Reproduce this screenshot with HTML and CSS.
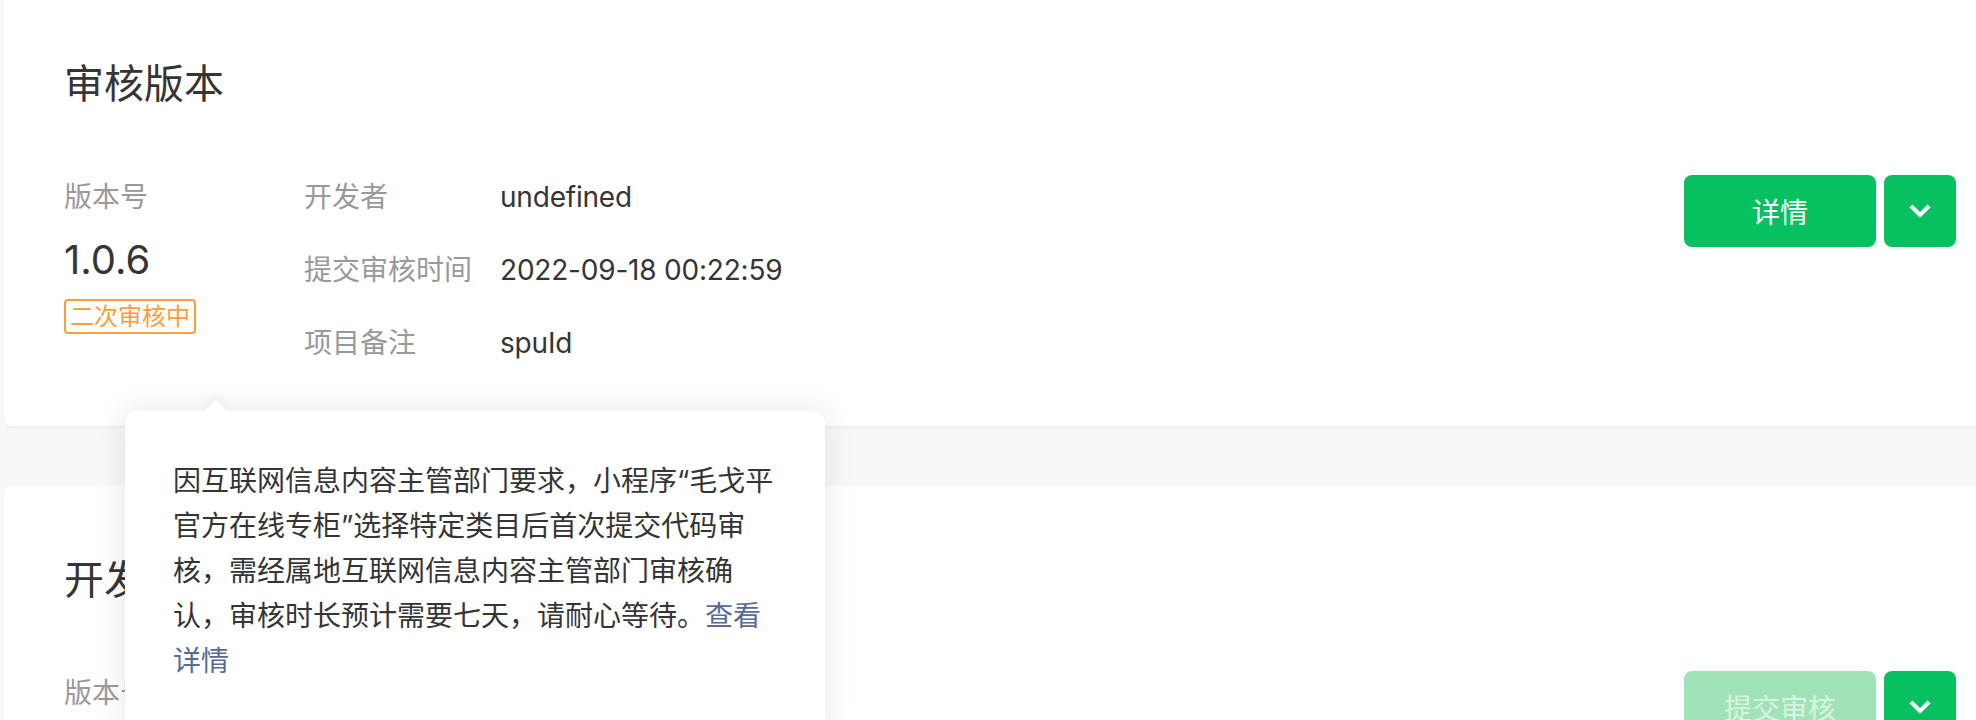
FILE: index.html
```html
<!DOCTYPE html>
<html lang="zh-CN">

	<head>
		<meta charset="utf-8" />
		<title>版本管理</title>
		<link rel="stylesheet" href="styles.css">
	</head>

	<body>
		<div class="page">
			<div class="card">
				<h2 class="card-title">审核版本</h2>
				<div class="card-body">
					<div class="version">
						<div class="version-label">版本号</div>
						<div class="version-num">1.0.6</div>
						<span class="tag">二次审核中</span>
					</div>
					<dl class="info">
						<div class="info-row"><dt>开发者</dt><dd>undefined</dd></div>
						<div class="info-row"><dt>提交审核时间</dt><dd>2022-09-18 00:22:59</dd></div>
						<div class="info-row"><dt>项目备注</dt><dd>spuId</dd></div>
					</dl>
					<div class="actions">
						<button class="btn">详情</button>
						<button class="btn btn-more">
							<svg width="24" height="16" viewBox="0 0 24 16"><polyline points="3,3 12,12 21,3" fill="none" stroke="#fff" stroke-width="4" /></svg>
						</button>
					</div>
				</div>

				<div class="popover">
					因互联网信息内容主管部门要求，小程序“毛戈平官方在线专柜”选择特定类目后首次提交代码审核，需经属地互联网信息内容主管部门审核确认，审核时长预计需要七天，请耐心等待。<a href="#">查看详情</a>
				</div>
			</div>

			<div class="card">
				<h2 class="card-title">开发版本</h2>
				<div class="card-body">
					<div class="version">
						<div class="version-label">版本号</div>
						<div class="version-num">1.0.7</div>
					</div>
					<dl class="info">
						<div class="info-row"><dt>开发者</dt><dd>undefined</dd></div>
						<div class="info-row"><dt>提交时间</dt><dd>2022-09-18 00:20:13</dd></div>
					</dl>
					<div class="actions">
						<button class="btn btn-disabled">提交审核</button>
						<button class="btn btn-more">
							<svg width="24" height="16" viewBox="0 0 24 16"><polyline points="3,3 12,12 21,3" fill="none" stroke="#fff" stroke-width="4" /></svg>
						</button>
					</div>
				</div>
			</div>
		</div>
	</body>

</html>
```

FILE: styles.css
```css
* {
	margin: 0;
	padding: 0;
}

a {
	text-decoration: none;
	color: #576b95;
}

body {
	background: #f7f8fa;
	overflow: hidden;
	font-family: Inter, "Noto Sans CJK SC", sans-serif;
	color: #353535;
}

.page {
	margin-top: -10px;
	display: flex;
	flex-direction: column;
	gap: 60px;
}

.card {
	position: relative;
	margin: 0 -40px 0 4px;
	padding: 66px 60px 61px;
	background: #fff;
	border-radius: 8px;
	box-shadow: 0 2px 3px rgba(0, 0, 0, .05);
}

.card-title {
	font-size: 40px;
	line-height: 56px;
	font-weight: 400;
}

.card-body {
	display: flex;
	align-items: flex-start;
	margin-top: 63px;
}

.version {
	width: 240px;
	display: flex;
	flex-direction: column;
	align-items: flex-start;
}

.version-label {
	font-size: 28px;
	line-height: 44px;
	color: #999;
}

.version-num {
	margin-top: 18px;
	font-size: 40px;
	line-height: 46px;
}

.tag {
	margin-top: 16px;
	padding: 0 4px;
	border: 2px solid #fa9d3b;
	border-radius: 4px;
	font-size: 24px;
	line-height: 31px;
	color: #fa9d3b;
}

.info {
	display: flex;
	flex-direction: column;
	gap: 29px;
	font-size: 28px;
	line-height: 44px;
}

.info-row {
	display: flex;
}

.info dt {
	width: 196px;
	color: #999;
}

.info dd {
	letter-spacing: -0.2px;
}

.actions {
	margin-left: auto;
	display: flex;
	gap: 8px;
}

.btn {
	width: 192px;
	height: 72px;
	border: none;
	border-radius: 8px;
	background: #07c160;
	color: #fff;
	font-family: Inter, "Noto Sans CJK SC", sans-serif;
	font-size: 28px;
	cursor: pointer;
}

.btn-more {
	width: 72px;
	display: flex;
	align-items: center;
	justify-content: center;
}

.btn-disabled {
	background: #9fe3b6;
	color: rgba(255, 255, 255, .6);
	cursor: default;
}

.popover {
	position: absolute;
	z-index: 10;
	left: 121px;
	top: 421px;
	width: 700px;
	padding: 48px;
	box-sizing: border-box;
	background: #fff;
	border-radius: 12px;
	box-shadow: 0 0 32px rgba(0, 0, 0, .1);
	font-size: 28px;
	line-height: 45px;
	color: #353535;
}

.popover::before {
	content: "";
	position: absolute;
	left: 82px;
	top: -8px;
	width: 17px;
	height: 17px;
	background: #fff;
	transform: rotate(45deg);
	box-shadow: -4px -4px 8px rgba(0, 0, 0, .04);
}
```
